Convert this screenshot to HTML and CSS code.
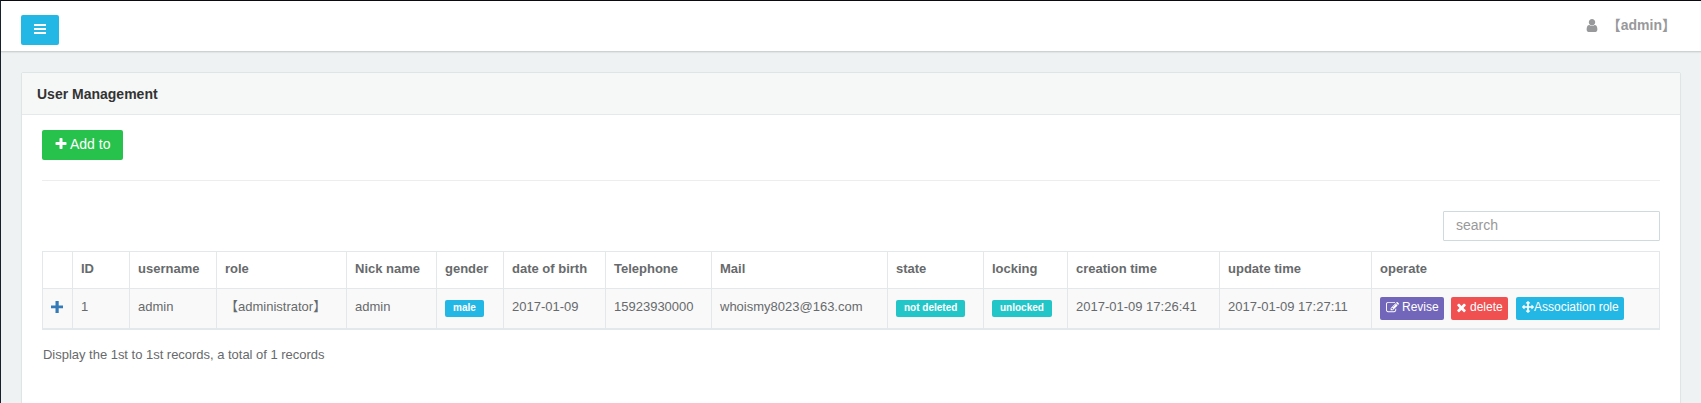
FILE: index.html
```
<!DOCTYPE html>
<html lang="en">
<head>
<meta charset="utf-8">
<title>User Management</title>
<link rel="stylesheet" href="styles.css">
</head>
<body>
<svg class="sprite" aria-hidden="true">
  <symbol id="plus" viewBox="0 0 1792 1792"><path d="M1600 736v192q0 40-28 68t-68 28h-416v416q0 40-28 68t-68 28h-192q-40 0-68-28t-28-68v-416h-416q-40 0-68-28t-28-68v-192q0-40 28-68t68-28h416v-416q0-40 28-68t68-28h192q40 0 68 28t28 68v416h416q40 0 68 28t28 68z"/></symbol>
  <symbol id="user" viewBox="0 0 1792 1792"><path d="M1536 1399q0 109-62.500 187t-150.500 78h-854q-88 0-150.500-78t-62.500-187q0-85 8.500-160.500t31.500-152 58.500-131 94-89 134.500-34.500q131 128 313 128t313-128q76 0 134.500 34.500t94 89 58.500 131 31.500 152 8.500 160.500zm-256-887q0 159-112.500 271.500t-271.500 112.500-271.500-112.500-112.500-271.500 112.500-271.500 271.500-112.500 271.500 112.500 112.500 271.500z"/></symbol>
  <symbol id="times" viewBox="0 0 1792 1792"><path d="M1490 1322q0 40-28 68l-136 136q-28 28-68 28t-68-28l-294-294-294 294q-28 28-68 28t-68-28l-136-136q-28-28-28-68t28-68l294-294-294-294q-28-28-28-68t28-68l136-136q28-28 68-28t68 28l294 294 294-294q28-28 68-28t68 28l136 136q28 28 28 68t-28 68l-294 294 294 294q28 28 28 68z"/></symbol>
  <symbol id="arrows" viewBox="0 0 1792 1792"><path d="M1792 896q0 26-19 45l-256 256q-19 19-45 19t-45-19-19-45v-128h-384v384h128q26 0 45 19t19 45-19 45l-256 256q-19 19-45 19t-45-19l-256-256q-19-19-19-45t19-45 45-19h128v-384h-384v128q0 26-19 45t-45 19-45-19l-256-256q-19-19-19-45t19-45l256-256q19-19 45-19t45 19 19 45v128h384v-384h-128q-26 0-45-19t-19-45 19-45l256-256q19-19 45-19t45 19l256 256q19 19 19 45t-19 45-45 19h-128v384h384v-128q0-26 19-45t45-19 45 19l256 256q19 19 19 45z"/></symbol>
  <symbol id="edit" viewBox="0 0 1792 1792"><path d="M888 1184l116-116-152-152-116 116v56h96v96h56zm440-720q-16-16-33 1l-350 350q-17 17-1 33t33-1l350-350q17-17 1-33zm80 594v190q0 119-84.500 203.500t-203.500 84.500h-832q-119 0-203.500-84.500t-84.500-203.500v-832q0-119 84.500-203.500t203.500-84.500h832q63 0 117 25 15 7 18 23 3 17-9 29l-49 49q-14 14-32 8-23-6-45-6h-832q-66 0-113 47t-47 113v832q0 66 47 113t113 47h832q66 0 113-47t47-113v-126q0-13 9-22l64-64q15-15 35-7t20 29zm-96-738l288 288-672 672h-288v-288zm444 132l-92 92-288-288 92-92q28-28 68-28t68 28l152 152q28 28 28 68t-28 68z"/></symbol>
</svg>
<div class="app">
  <header class="navbar">
    <button class="btn menu-btn" aria-label="Menu"><svg class="bars" viewBox="0 0 12 10"><path d="M0 0h12v2H0zM0 4h12v2H0zM0 8h12v2H0z"/></svg></button>
    <div class="account"><svg class="user-icon"><use href="#user"/></svg><span>【admin】</span></div>
  </header>
  <main class="panel">
    <h1 class="panel-heading">User Management</h1>
    <div class="panel-body">
      <button class="btn add-btn"><svg class="add-icon"><use href="#plus"/></svg><span>Add to</span></button>
      <hr class="divider">
      <div class="toolbar"><input class="search" type="text" placeholder="search"></div>
      <table class="grid">
        <colgroup><col class="c-toggle"><col class="c-id"><col class="c-username"><col class="c-role"><col class="c-nick"><col class="c-gender"><col class="c-birth"><col class="c-phone"><col class="c-mail"><col class="c-state"><col class="c-lock"><col class="c-time"><col class="c-time"><col class="c-operate"></colgroup>
        <thead><tr><th></th><th>ID</th><th>username</th><th>role</th><th>Nick name</th><th>gender</th><th>date of birth</th><th>Telephone</th><th>Mail</th><th>state</th><th>locking</th><th>creation time</th><th>update time</th><th>operate</th></tr></thead>
        <tbody><tr>
          <td class="toggle"><svg class="expand" viewBox="0 0 12 12"><path d="M4.500 0h3.200v4.600H12v2.600H7.700V12H4.500V7.200H0V4.600h4.500z"/></svg></td>
          <td>1</td><td>admin</td><td>【administrator】</td><td>admin</td>
          <td><span class="label info">male</span></td>
          <td>2017-01-09</td><td>15923930000</td><td>whoismy8023@163.com</td>
          <td><span class="label success">not deleted</span></td>
          <td><span class="label success">unlocked</span></td>
          <td>2017-01-09 17:26:41</td><td>2017-01-09 17:27:11</td>
          <td><div class="actions">
            <button class="btn small revise"><svg><use href="#edit"/></svg><span>Revise</span></button>
            <button class="btn small delete"><svg><use href="#times"/></svg><span>delete</span></button>
            <button class="btn small assoc"><svg><use href="#arrows"/></svg><span>Association role</span></button>
          </div></td>
        </tr></tbody>
      </table>
      <p class="summary">Display the 1st to 1st records, a total of 1 records</p>
    </div>
  </main>
</div>
</body>
</html>
```

FILE: styles.css
```
* { box-sizing: border-box; }
body {
  margin: 0;
  height: 403px;
  overflow: hidden;
  background: #eef2f3;
  color: #676a6c;
  font: 13px/20px "Liberation Sans", "Noto Sans CJK SC", sans-serif;
}
.sprite { display: none; }
svg { fill: currentColor; flex: none; }
.app {
  height: 403px;
  overflow: hidden;
  border-top: 1px solid #0a0a10;
  border-left: 1px solid #17202c;
}
.navbar {
  height: 51px;
  padding: 14px 25px 0 20px;
  display: flex;
  justify-content: space-between;
  align-items: flex-start;
  background: #fff;
  border-bottom: 1px solid #cbd3d3;
  box-shadow: 0 1px 1px rgba(0, 0, 0, .05);
}
.btn {
  display: flex;
  align-items: center;
  border: 0;
  border-radius: 2px;
  color: #fff;
  font: 14px/20px "Liberation Sans", sans-serif;
  white-space: nowrap;
}
.menu-btn {
  width: 38px;
  height: 30px;
  padding: 0 0 2px;
  justify-content: center;
  background: #23b7e5;
}
.bars { width: 12px; height: 10px; }
.account {
  display: flex;
  align-items: center;
  gap: 7px;
  color: #98999b;
  font-size: 14px;
  font-weight: bold;
}
.user-icon { width: 16px; height: 15px; }
.panel {
  height: 400px;
  margin: 20px 20px 0;
  background: #fff;
  border: 1px solid #dee5e7;
  border-radius: 2px;
  box-shadow: 0 1px 1px rgba(0, 0, 0, .05);
}
.panel-heading {
  margin: 0;
  height: 42px;
  padding: 11px 15px;
  background: #f6f8f8;
  border-bottom: 1px solid #e4eaec;
  color: #333;
  font-size: 14px;
  line-height: 20px;
}
.panel-body { padding: 15px 20px; }
.add-btn {
  width: 81px;
  height: 30px;
  padding: 0 0 2px 12px;
  gap: 2px;
  background: #27c24c;
}
.add-icon { width: 14px; height: 14px; }
.divider { margin: 20px 0 30px; border: 0; border-top: 1px solid #ededed; }
.toolbar { display: flex; justify-content: flex-end; }
.search {
  width: 217px;
  height: 30px;
  padding: 0 12px 2px;
  border: 1px solid #cfdadd;
  border-radius: 1px;
  font: 14px/20px "Liberation Sans", sans-serif;
}
.search::placeholder { color: #999; opacity: 1; }
.grid {
  width: 1618px;
  margin-top: 10px;
  table-layout: fixed;
  border-collapse: separate;
  border-spacing: 0;
  border-right: 1px solid #e3e8ea;
  border-bottom: 2px solid #e3e8ea;
}
.grid th, .grid td {
  border-top: 1px solid #e3e8ea;
  border-left: 1px solid #e3e8ea;
  padding: 0 8px;
  text-align: left;
  vertical-align: middle;
  white-space: nowrap;
}
.grid th { height: 37px; padding-bottom: 2px; }
.grid td { height: 40px; padding-bottom: 3px; background: #f9f9f9; }
.c-toggle { width: 30px; }
.c-id { width: 57px; }
.c-username { width: 87px; }
.c-role { width: 130px; }
.c-nick { width: 90px; }
.c-gender { width: 67px; }
.c-birth { width: 102px; }
.c-phone { width: 106px; }
.c-mail { width: 176px; }
.c-state { width: 96px; }
.c-lock { width: 84px; }
.c-time { width: 152px; }
.expand { display: block; width: 12px; height: 12px; color: #337ab7; }
.label {
  display: block;
  width: max-content;
  height: 17px;
  padding: 0 8px;
  border-radius: 2px;
  color: #fff;
  font-size: 10px;
  font-weight: bold;
  line-height: 15px;
}
.grid .label { transform: translateY(1px); }
.info, .assoc { background: #23b7e5; }
.success { background: #23c6c8; }
.actions { display: flex; padding-top: 2px; }
.small {
  height: 23px;
  padding: 0 0 2px 6px;
  font-size: 12px;
}
.small svg { width: 12px; height: 12px; }
.small span { margin-left: 4px; }
.revise { width: 64px; background: #7266ba; }
.revise svg { width: 13px; height: 13px; }
.revise span { margin-left: 3px; }
.delete { width: 57px; margin-left: 7px; padding-left: 4px; background: #f05050; }
.delete svg { width: 13px; height: 13px; }
.delete span { margin-left: 2px; }
.assoc { width: 108px; margin-left: 8px; }
.assoc span { margin-left: 0; }
.summary { margin: 15px 0 0 1px; letter-spacing: -.02px; }
```
